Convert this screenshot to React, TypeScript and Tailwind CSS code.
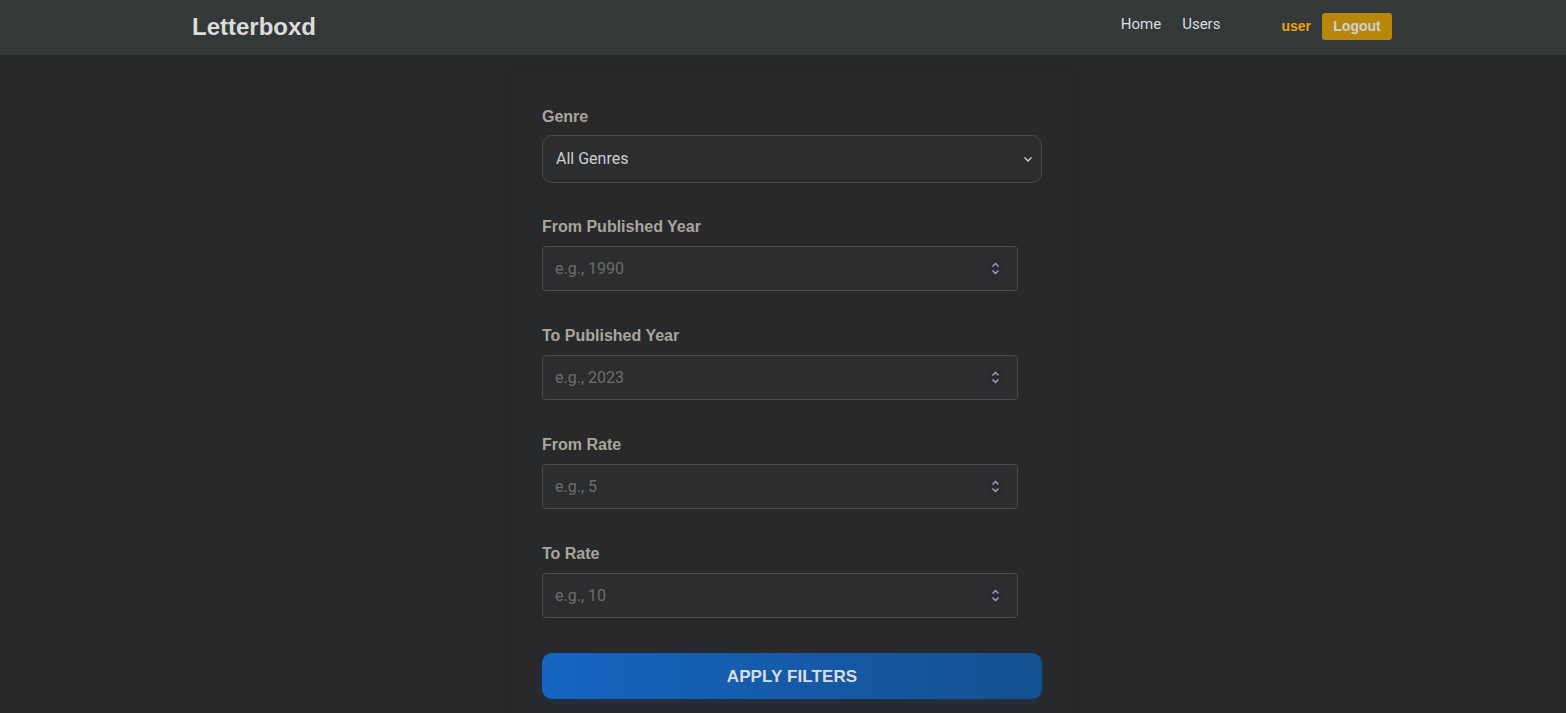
import React from "react";

const fields = [
  { label: "From Published Year", placeholder: "e.g., 1990" },
  { label: "To Published Year", placeholder: "e.g., 2023" },
  { label: "From Rate", placeholder: "e.g., 5" },
  { label: "To Rate", placeholder: "e.g., 10" },
];

function Spinner() {
  return (
    <span className="flex h-[17px] w-[15px] items-center justify-center rounded-[2px] bg-[#2b2a33]">
      <svg width="9" height="13" viewBox="0 0 9 13" fill="none">
        <path d="M1.5 4.5 4.5 1.5 7.5 4.5" stroke="#a9a6b4" strokeWidth="1.4" />
        <path d="M1.5 8.5 4.5 11.5 7.5 8.5" stroke="#a9a6b4" strokeWidth="1.4" />
      </svg>
    </span>
  );
}

export default function App() {
  return (
    <div className="min-h-[713px] bg-[#28292b] font-['Roboto',sans-serif]">
      <nav className="h-[55px] bg-[#343839]">
        <div className="ml-[192px] flex h-full w-[1200px] items-center">
          <span className="-mt-[2px] font-['Liberation_Sans',sans-serif] text-[24px] font-bold text-[#dcdcdc]">
            Letterboxd
          </span>
          <div className="ml-auto flex items-center">
            <a className="-mt-[6px] text-[15px] text-[#dcdde2]">Home</a>
            <a className="-mt-[6px] ml-[21px] text-[15px] text-[#dcdde2]">Users</a>
            <span className="-mt-[2px] ml-[61px] font-['Liberation_Sans',sans-serif] text-[14px] font-bold text-[#e8a317]">
              user
            </span>
            <button
              type="button"
              className="-mt-[2px] ml-[11px] h-[27px] w-[70px] rounded-[3px] bg-[#b8860b] font-['Liberation_Sans',sans-serif] text-[14px] font-bold text-[#d0d0d0]"
            >
              Logout
            </button>
          </div>
        </div>
      </nav>

      <div className="ml-[512px] mt-[17px] w-[560px] rounded-md px-[30px] pb-[20px] pt-[35px] shadow-[0_0_14px_rgba(0,0,0,0.1)]">
        <div className="mb-[34px]">
          <label className="mb-[8px] block font-['Liberation_Sans',sans-serif] text-[16px] font-bold leading-[20px] text-[#aaa69d]">
            Genre
          </label>
          <div className="flex h-[48px] w-[500px] items-center justify-between rounded-[10px] border border-[#48494b] bg-[#2c2d2f] pl-[13px] pr-[8px]">
            <span className="text-[16px] text-[#cfcfcf]">All Genres</span>
            <svg width="10" height="8" viewBox="0 0 10 8" fill="none">
              <path d="M1.5 2.5 5 6 8.5 2.5" stroke="#c8c8c8" strokeWidth="1.5" />
            </svg>
          </div>
        </div>

        {fields.map((f) => (
          <div key={f.label} className="mb-[35px]">
            <label className="mb-[9px] block font-['Liberation_Sans',sans-serif] text-[16px] font-bold leading-[20px] text-[#aaa69d]">
              {f.label}
            </label>
            <div className="flex h-[45px] w-[476px] items-center justify-between rounded-[4px] border border-[#4a4b4d] bg-[#2c2d2f] pl-[12px] pr-[14px]">
              <span className="text-[16px] text-[#6d6d6d]">{f.placeholder}</span>
              <Spinner />
            </div>
          </div>
        ))}

        <button
          type="button"
          className="flex h-[46px] w-[500px] items-center justify-center rounded-[10px] bg-gradient-to-r from-[#1565c2] to-[#15508f] pt-[2px] font-['Liberation_Sans',sans-serif] text-[17px] font-bold tracking-[0.1px] text-[#dcdcdc] shadow-[0_4px_12px_rgba(21,80,150,0.25)]"
        >
          APPLY FILTERS
        </button>
      </div>
    </div>
  );
}
